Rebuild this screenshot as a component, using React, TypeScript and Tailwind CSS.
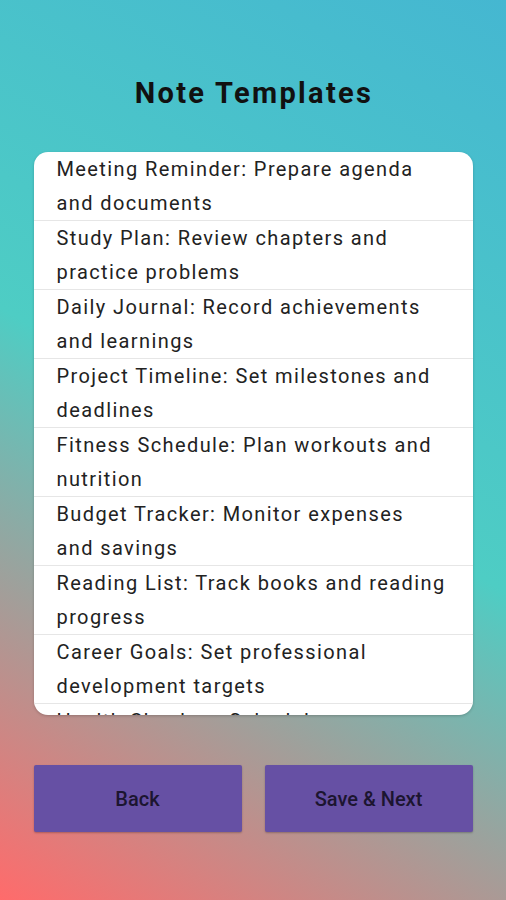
import React from "react";

const items = [
  "Meeting Reminder: Prepare agenda and documents",
  "Study Plan: Review chapters and practice problems",
  "Daily Journal: Record achievements and learnings",
  "Project Timeline: Set milestones and deadlines",
  "Fitness Schedule: Plan workouts and nutrition",
  "Budget Tracker: Monitor expenses and savings",
  "Reading List: Track books and reading progress",
  "Career Goals: Set professional development targets",
  "Health Checkup: Schedule appointments and reminders",
];

export default function App() {
  return (
    <div
      className="w-[506px] h-[900px] overflow-hidden flex flex-col items-center bg-[linear-gradient(29.35deg,#ff6b6b_0%,#4ecdc4_50%,#45b7d1_100%)]"
      style={{ fontFamily: "Roboto, 'Noto Sans', sans-serif" }}
    >
      <h1 className="mt-[75px] pl-[2px] text-[29px] leading-[36px] font-bold tracking-[0.08em] text-[#111]">
        Note Templates
      </h1>
      <div className="mt-[41px] w-[439px] h-[563px] bg-white rounded-[14px] overflow-hidden shadow-[0_1px_3px_rgba(0,0,0,0.2)]">
        {items.map((t) => (
          <div
            key={t}
            className="pl-[23px] pr-[25px] border-b border-[#e6e6e6] text-[20px] leading-[34px] tracking-[0.07em] text-[#222]"
          >
            {t}
          </div>
        ))}
      </div>
      <div className="mt-[50px] w-[439px] flex justify-between">
        <button className="w-[208px] h-[67px] bg-[#6650a4] rounded-[2px] text-[20px] font-medium text-[#1c1530] shadow-[0_1px_2px_rgba(0,0,0,0.25)]">
          Back
        </button>
        <button className="w-[208px] h-[67px] bg-[#6650a4] rounded-[2px] text-[20px] font-medium text-[#1c1530] shadow-[0_1px_2px_rgba(0,0,0,0.25)]">
          Save &amp; Next
        </button>
      </div>
    </div>
  );
}
